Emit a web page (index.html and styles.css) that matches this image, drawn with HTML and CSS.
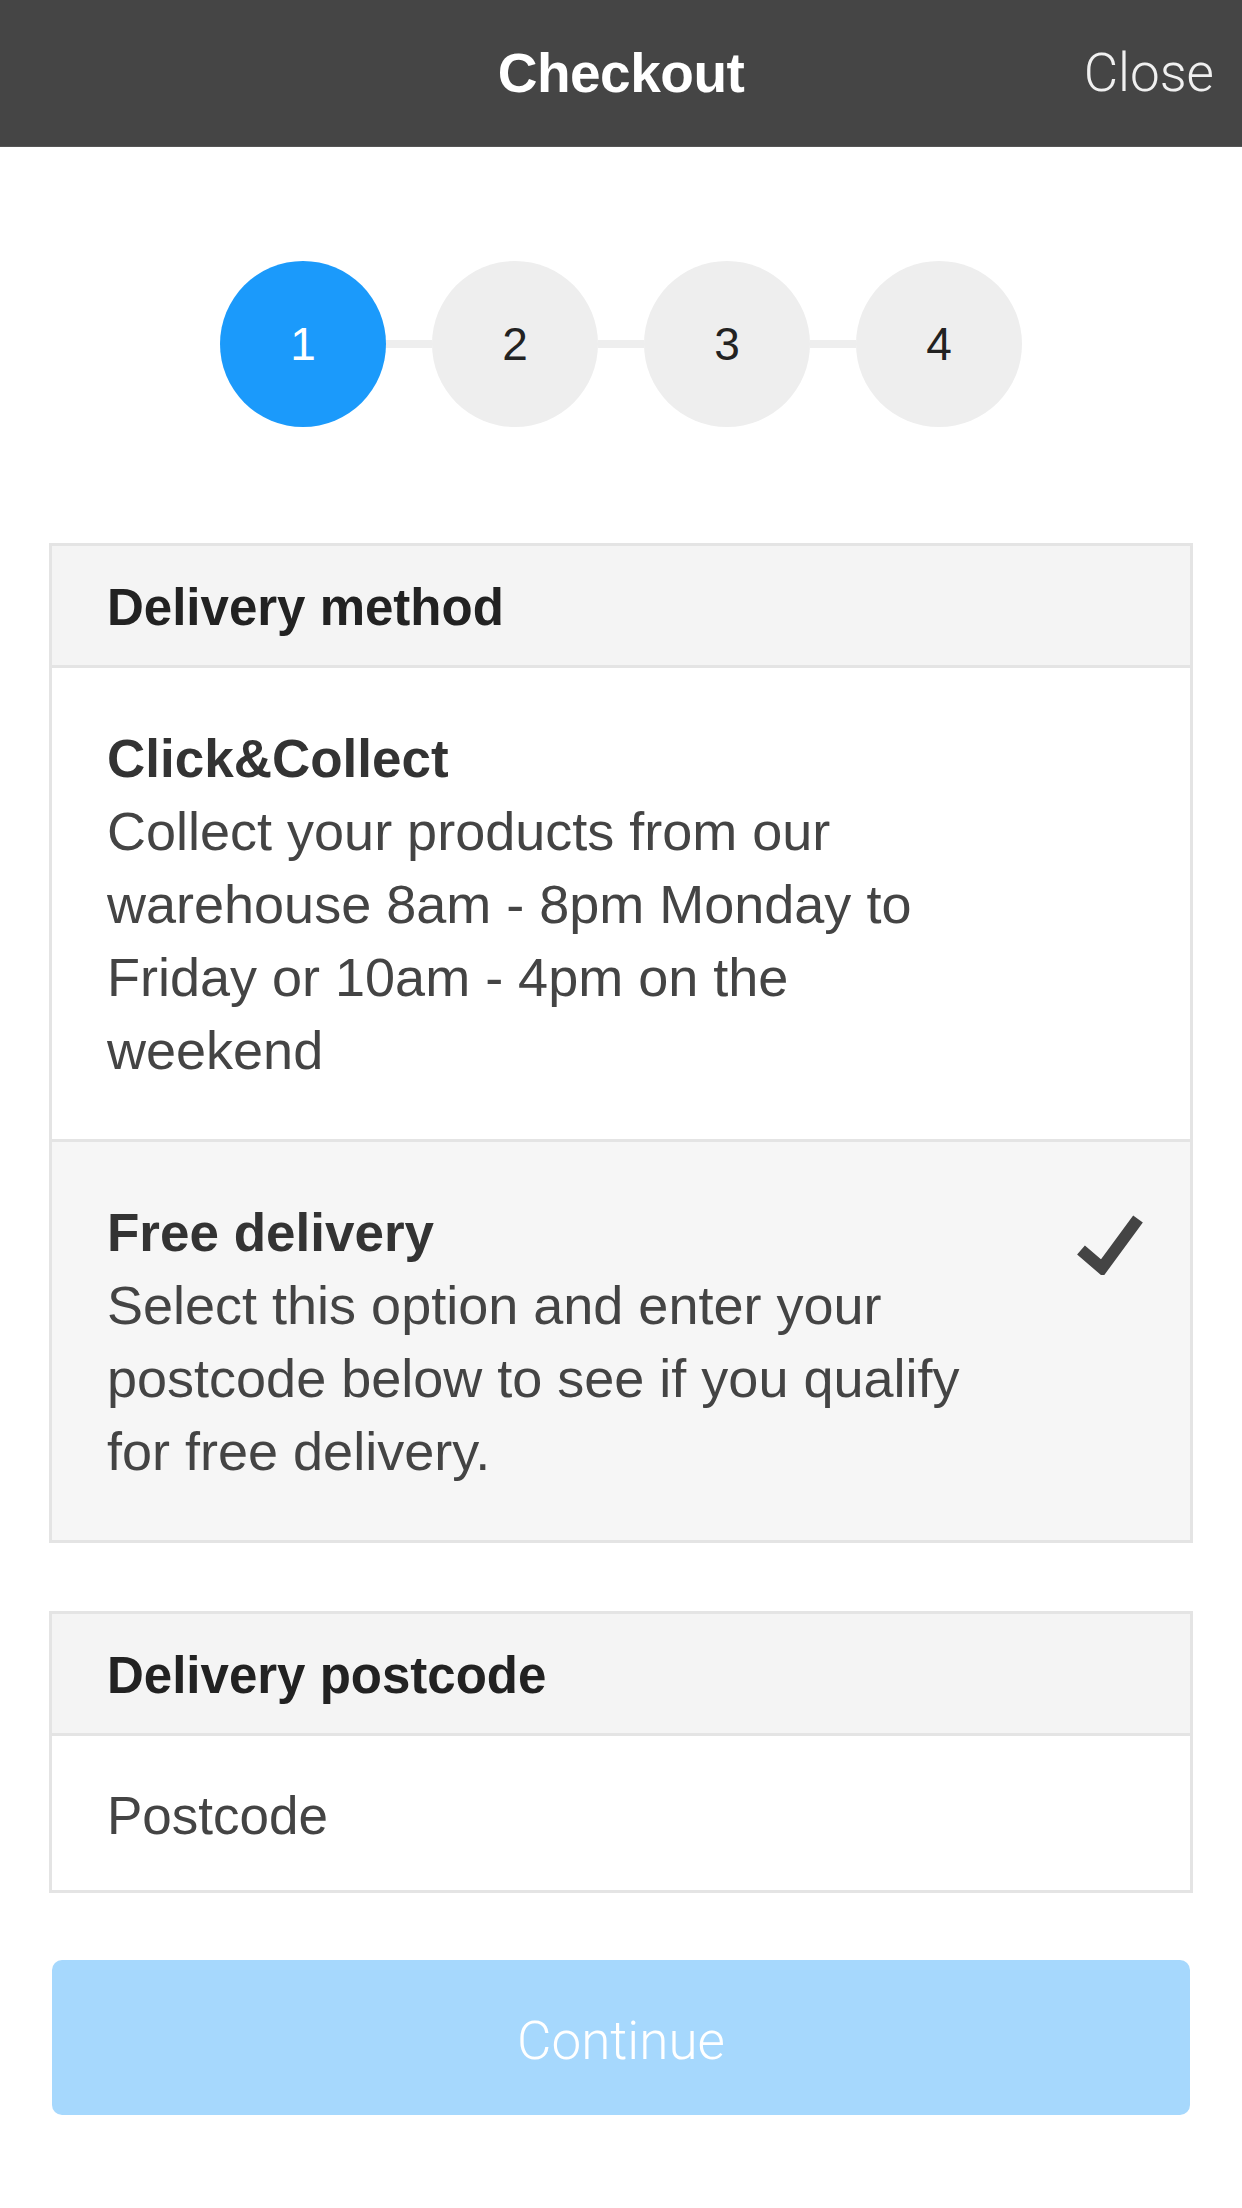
FILE: index.html
```html
<!DOCTYPE html>
<html lang="en">
<head>
<meta charset="utf-8">
<title>Checkout</title>
<link rel="stylesheet" href="styles.css">
</head>
<body>
<header class="topbar">
  <div></div>
  <h1 class="topbar-title">Checkout</h1>
  <div class="topbar-close">Close</div>
</header>

<nav class="steps">
  <div class="step step-active">1</div>
  <div class="step-line"></div>
  <div class="step">2</div>
  <div class="step-line"></div>
  <div class="step">3</div>
  <div class="step-line"></div>
  <div class="step">4</div>
</nav>

<section class="card">
  <div class="card-head">Delivery method</div>
  <div class="option">
    <div class="option-text">
      <div class="option-title">Click&amp;Collect</div>
      <div class="option-desc">Collect your products from our warehouse 8am - 8pm Monday to Friday or 10am - 4pm on the weekend</div>
    </div>
  </div>
  <div class="option option-selected">
    <div class="option-text">
      <div class="option-title">Free delivery</div>
      <div class="option-desc">Select this option and enter your postcode below to see if you qualify for free delivery.</div>
    </div>
    <svg class="check" width="66" height="62" viewBox="0 0 66 62">
      <polyline points="4,37 25,55 61,6" fill="none" stroke="#444" stroke-width="12" stroke-linejoin="miter"/>
    </svg>
  </div>
</section>

<section class="card card-postcode">
  <div class="card-head">Delivery postcode</div>
  <div class="postcode">Postcode</div>
</section>

<div class="btn-continue">Continue</div>
</body>
</html>
```

FILE: styles.css
```css
html, body {
  margin: 0;
  padding: 0;
  background: #ffffff;
}

body {
  font-family: "Liberation Sans", Arial, sans-serif;
  color: #444;
}

.topbar {
  height: 146px;
  background: #454545;
  display: grid;
  grid-template-columns: 1fr auto 1fr;
  align-items: center;
  box-shadow: 0 1px 0 #555;
}

.topbar-title {
  margin: 0;
  font-size: 55px;
  font-weight: bold;
  color: #ffffff;
  letter-spacing: -0.5px;
}

.topbar-close {
  justify-self: end;
  padding-right: 28px;
  font-family: Roboto, "Liberation Sans", sans-serif;
  font-weight: 300;
  font-size: 53px;
  color: #f0f0f0;
}

.steps {
  display: flex;
  justify-content: center;
  align-items: center;
  margin-top: 115px;
}

.step {
  width: 166px;
  height: 166px;
  border-radius: 50%;
  background: #eeeeee;
  color: #222;
  font-size: 46px;
  display: flex;
  align-items: center;
  justify-content: center;
}

.step-active {
  background: #1b9afb;
  color: #ffffff;
}

.step-line {
  width: 46px;
  height: 8px;
  background: #eeeeee;
}

.card {
  margin: 116px 49px 0;
  border: 3px solid #e4e4e4;
}

.card-postcode {
  margin-top: 68px;
}

.card-head {
  height: 119px;
  box-sizing: border-box;
  padding-top: 4px;
  background: #f4f4f4;
  border-bottom: 3px solid #e4e4e4;
  display: flex;
  align-items: center;
  padding-left: 55px;
  font-size: 51px;
  font-weight: bold;
  color: #222;
  height: 122px;
}

.option {
  display: flex;
  align-items: flex-start;
  padding: 54px 47px 52px 55px;
  background: #ffffff;
  border-bottom: 3px solid #e4e4e4;
}

.option:last-child {
  border-bottom: none;
}

.option-selected {
  background: #f6f6f6;
}

.option-text {
  width: 862px;
  font-size: 54px;
  line-height: 73px;
}

.option-title {
  font-size: 53px;
  font-weight: bold;
  color: #333;
}

.option-desc {
  color: #444;
}

.check {
  margin-left: auto;
  margin-top: 17px;
  flex: none;
}

.postcode {
  height: 154px;
  box-sizing: border-box;
  padding-top: 5px;
  display: flex;
  align-items: center;
  padding-left: 55px;
  font-size: 53px;
  color: #444;
}

.btn-continue {
  margin: 67px 52px 0;
  height: 155px;
  box-sizing: border-box;
  padding-top: 6px;
  border-radius: 10px;
  background: #a6d8fd;
  color: #ffffff;
  display: flex;
  align-items: center;
  justify-content: center;
  font-family: Roboto, "Liberation Sans", sans-serif;
  font-weight: 300;
  font-size: 53px;
}
```
